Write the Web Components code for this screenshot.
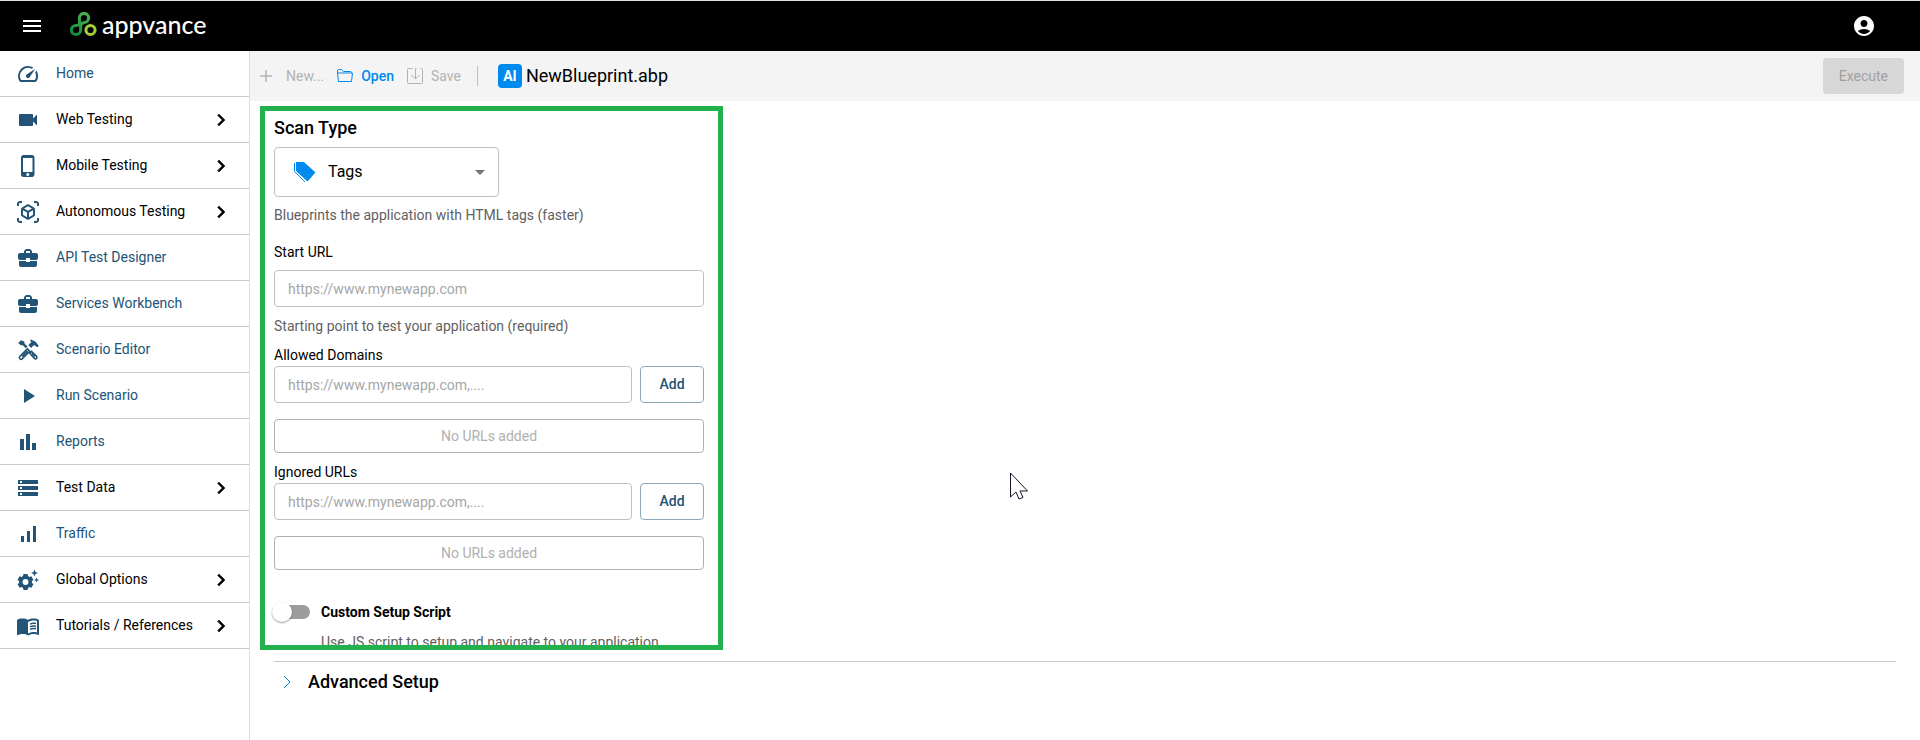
<!DOCTYPE html>
<html lang="en">
<head>
<meta charset="utf-8">
<title>NewBlueprint.abp</title>
<style>
  html, body{
    height: 100%;
    margin: 0;
  }
  body{
    background: #fff;
    color: #000;
    font-family: Roboto, "Liberation Sans", sans-serif;
    font-size: 14px;
    line-height: 20px;
    overflow: hidden;
    --navy: #215476;
    --blue: #008aee;
    --green: #22b14c;
    --muted: #5f5f5f;
    --disabled: #b2b2b2;
    --line: #c8c8c8;
  }
</style>
</head>
<body>

<app-shell>
  <app-header slot="header"></app-header>
  <side-nav slot="nav">
    <nav-item icon="speed">Home</nav-item>
    <nav-item icon="camera" group>Web Testing</nav-item>
    <nav-item icon="phone" group>Mobile Testing</nav-item>
    <nav-item icon="cube" group>Autonomous Testing</nav-item>
    <nav-item icon="case">API Test Designer</nav-item>
    <nav-item icon="case">Services Workbench</nav-item>
    <nav-item icon="tools">Scenario Editor</nav-item>
    <nav-item icon="play">Run Scenario</nav-item>
    <nav-item icon="bars">Reports</nav-item>
    <nav-item icon="storage" group>Test Data</nav-item>
    <nav-item icon="signal">Traffic</nav-item>
    <nav-item icon="gear" group>Global Options</nav-item>
    <nav-item icon="book" group>Tutorials / References</nav-item>
  </side-nav>
  <tool-bar>NewBlueprint.abp</tool-bar>
  <scan-panel>
    <scan-type></scan-type>
    <text-field label="Start URL" placeholder="https://www.mynewapp.com">Starting point to test your application (required)</text-field>
    <url-list label="Allowed Domains" placeholder="https://www.mynewapp.com,....">No URLs added</url-list>
    <url-list label="Ignored URLs" placeholder="https://www.mynewapp.com,....">No URLs added</url-list>
    <toggle-switch label="Custom Setup Script">Use JS script to setup and navigate to your application</toggle-switch>
  </scan-panel>
  <advanced-setup>Advanced Setup</advanced-setup>
</app-shell>
<mouse-pointer></mouse-pointer>

<script>

const ICONS = {
  speed: '<path d="m20.38 8.57-1.23 1.85a8 8 0 0 1-.22 7.58H5.07A8 8 0 0 1 15.58 6.85l1.85-1.23A10 10 0 0 0 3.35 19a2 2 0 0 0 1.72 1h13.85a2 2 0 0 0 1.74-1 10 10 0 0 0-.27-10.44zm-9.79 6.84a2 2 0 0 0 2.83 0l5.66-8.49-8.49 5.66a2 2 0 0 0 0 2.83z"/>',
  camera: '<path d="M17 10.5V7c0-.55-.45-1-1-1H4c-.55 0-1 .45-1 1v10c0 .55.45 1 1 1h12c.55 0 1-.45 1-1v-3.500l4 4v-11l-4 4z"/>',
  phone: '<path d="M16 1H7.500C6.100 1 5 2.100 5 3.500v17C5 21.900 6.100 23 7.500 23H16c1.400 0 2.500-1.100 2.500-2.500v-17C18.500 2.100 17.400 1 16 1zm-4.250 21c-.83 0-1.500-.67-1.500-1.500s.67-1.500 1.500-1.500 1.500.67 1.500 1.500-.67 1.500-1.500 1.500zM16.500 18H7V4h9.500v14z"/>',
  cube: '<path d="M3 4c0-.55.45-1 1-1h2V1H4C2.340 1 1 2.340 1 4v2h2V4zm0 16v-2H1v2c0 1.660 1.340 3 3 3h2v-2H4c-.55 0-1-.45-1-1zM20 1h-2v2h2c.55 0 1 .45 1 1v2h2V4c0-1.660-1.340-3-3-3zm1 19c0 .55-.45 1-1 1h-2v2h2c1.660 0 3-1.340 3-3v-2h-2v2zm-2-5.130V9.130c0-.72-.38-1.380-1-1.730l-5-2.880c-.31-.18-.65-.27-1-.27s-.69.09-1 .27L6 7.390c-.62.36-1 1.020-1 1.740v5.740c0 .72.38 1.380 1 1.730l5 2.880c.31.18.65.27 1 .27s.69-.09 1-.27l5-2.880c.62-.35 1-1.010 1-1.730zm-8 2.300-4-2.300v-4.630l4 2.330v4.600zm1-6.330L8.040 8.530 12 6.250l3.960 2.280L12 10.840zm5 4.030-4 2.300v-4.600l4-2.330v4.630z"/>',
  case: '<path d="M10 16v-1H3.010L3 19c0 1.110.89 2 2 2h14c1.110 0 2-.89 2-2v-4h-7v1h-4zm10-9h-4.010V5l-2-2h-4l-2 2v2H4c-1.100 0-2 .9-2 2v3c0 1.110.89 2 2 2h6v-2h4v2h6c1.100 0 2-.9 2-2V9c0-1.100-.9-2-2-2zm-6 0h-4V5h4v2z"/>',
  tools: '<path d="m15 10 3-3 3.500 2.200 1.300-1.300-3.200-4.100L15 1.600l-1 1 1.400 1.400-3 3zM5 2.200 2.200 5l2.600 2.300h2l3 3 1.700-1.700-3-3-.2-2z"/><path fill="none" stroke="currentColor" stroke-width="1.600" d="m11.300 10.900 2.400 2.400-7.400 7.400a1.700 1.700 0 0 1-2.400 0 1.700 1.700 0 0 1 0-2.400zm2.400 4.300 1.800-1.800 5 5a1.500 1.500 0 0 1 0 2 1.500 1.500 0 0 1-2 0zM6 18.600l5.500-5.500m4.500 2.200 3 3"/>',
  play: '<path d="M8 5v14l11-7z"/>',
  bars: '<path d="M4 9h4v11H4zm12 4h4v7h-4zm-6-9h4v16h-4z"/>',
  storage: '<path d="M2 20h20v-4H2v4zm2-3h2v2H4v-2zM2 4v4h20V4H2zm4 3H4V5h2v2zm-4 7h20v-4H2v4zm2-3h2v2H4v-2z"/>',
  signal: '<path d="M17 4h3v16h-3zM5 14h3v6H5zm6-5h3v11h-3z"/>',
  gear: '<path fill-rule="evenodd" d="m8 5-.5 2.100-1.400.8-2-.6-2 3.400 1.500 1.500v1.600L2.100 15.300l2 3.400 2-.6 1.400.8.5 2.100h4l.5-2.100 1.400-.8 2 .6 2-3.400-1.500-1.500v-1.600l1.500-1.500-2-3.400-2 .6-1.400-.8L12 5zm2 5a3 3 0 1 1 0 6 3 3 0 0 1 0-6z" transform="translate(-.5 1)"/><path d="m18.500 1.500 1 2.500 2.500 1-2.500 1-1 2.500-1-2.500-2.500-1 2.500-1zm2 8 .7 1.800 1.800.7-1.800.7-.7 1.800-.7-1.800-1.800-.7 1.800-.7z"/>',
  book: '<path d="M17.500 4.500c-1.950 0-4.050.4-5.500 1.500-1.450-1.100-3.550-1.500-5.500-1.500S2.450 4.900 1 6v14.650c0 .65.73.45.75.45C3.100 20.450 5.050 20 6.500 20c1.950 0 4.050.4 5.500 1.500 1.350-.85 3.800-1.500 5.500-1.500 1.650 0 3.350.3 4.750 1.050.41.21.75-.19.75-.45V6c-1.490-1.120-3.630-1.500-5.500-1.500zm3.500 14c-1.100-.35-2.300-.5-3.500-.5-1.700 0-4.150.65-5.500 1.500V8c1.350-.85 3.800-1.500 5.500-1.500 1.200 0 2.400.15 3.500.5v11.500zM14 9.200c2-.8 4-.9 6-.5v1.500c-2-.4-4-.3-6 .5zm0 2.700c2-.8 4-.9 6-.5v1.500c-2-.4-4-.3-6 .5zm0 2.700c2-.8 4-.9 6-.5v1.500c-2-.4-4-.3-6 .5z"/>',
  chevron: '<path d="M10 6 8.590 7.410 13.170 12l-4.580 4.590L10 18l6-6z" stroke="currentColor" stroke-width=".5"/>',
  account: '<path d="M12 2C6.480 2 2 6.480 2 12s4.480 10 10 10 10-4.480 10-10S17.520 2 12 2zm0 4c1.930 0 3.500 1.570 3.500 3.500S13.930 13 12 13s-3.500-1.570-3.500-3.500S10.070 6 12 6zm0 14c-2.030 0-4.430-.82-6.140-2.880C7.550 15.800 9.680 15 12 15s4.450.8 6.140 2.120C16.430 19.180 14.030 20 12 20z"/>',
  menu: '<path d="M3 18h18v-2H3v2zm0-5h18v-2H3v2zm0-7v2h18V6H3z"/>'
};

function icon(name){
  return `<svg width="24" height="24" viewBox="0 0 24 24" fill="currentColor" aria-hidden="true">${ICONS[name]}</svg>`;
}

class AppShell extends HTMLElement {
  
  constructor(){
    super();
    this.attachShadow({ mode: 'open' });
    this.shadowRoot.innerHTML = /*html*/ `
      <style>
        :host{
          display: flex;
          flex-direction: column;
          height: 100vh;
        }
        .body{
          display: flex;
          flex: 1;
          min-height: 0;
        }
        main{
          display: flex;
          flex-direction: column;
          flex: 1;
          min-width: 0;
        }
      </style>
      <slot name="header"></slot>
      <div class="body">
        <slot name="nav"></slot>
        <main><slot></slot></main>
      </div>
    `;
  }
  
}

class AppHeader extends HTMLElement {
  
  constructor(){
    super();
    this.attachShadow({ mode: 'open' });
    this.shadowRoot.innerHTML = /*html*/ `
      <style>
        :host{ display: block; }
        header{
          display: flex;
          align-items: center;
          height: 50px;
          padding: 0 44px 0 20px;
          border-top: 1px solid #dfe3e1;
          background: #000;
          color: #fff;
        }
        button{
          display: flex;
          padding: 0;
          border: none;
          background: none;
          color: inherit;
        }
        a{
          display: flex;
          align-items: center;
          gap: 4px;
          margin: 0 auto 0 26px;
          color: inherit;
          font: 500 25px/28px Lato, sans-serif;
          text-decoration: none;
        }
        a span{ padding-bottom: 4px; }
      </style>
      <header>
        <button aria-label="Menu">${icon('menu')}</button>
        <a href="#">
          <svg width="28" height="28" viewBox="0 0 28 28" fill="none" stroke-width="3" aria-hidden="true">
            <defs>
              <linearGradient id="leaf" gradientUnits="userSpaceOnUse" x1="2" y1="24" x2="18" y2="2">
                <stop offset="0" stop-color="#0b8a3e"/>
                <stop offset="1" stop-color="#4fb351"/>
              </linearGradient>
            </defs>
            <path stroke="url(#leaf)" d="M10.600 18a4.600 4.600 0 1 1-4.600-4.600c3 0 4.200-1 3.400-4.400v-3a4.600 4.600 0 1 1 4.600 4.600c-2.400.4-3.400 1.900-3.400 4.400z"/>
            <circle cx="20.500" cy="18" r="4.600" stroke="#a6ce39"/>
          </svg>
          <span>appvance</span>
        </a>
        <button aria-label="Account">${icon('account')}</button>
      </header>
    `;
  }
  
}

class SideNav extends HTMLElement {
  
  constructor(){
    super();
    this.attachShadow({ mode: 'open' });
    this.shadowRoot.innerHTML = /*html*/ `
      <style>
        :host{
          display: block;
          flex: none;
          width: 249px;
          border-right: 1px solid #dcdcdc;
        }
        nav{
          display: flex;
          flex-direction: column;
        }
      </style>
      <nav><slot></slot></nav>
    `;
  }
  
}

class NavItem extends HTMLElement {
  
  constructor(){
    super();
    this.attachShadow({ mode: 'open' });
    const isGroup = this.hasAttribute('group');
    const tag = isGroup ? 'button' : 'a';
    this.shadowRoot.innerHTML = /*html*/ `
      <style>
        :host{
          display: block;
          border-bottom: 1px solid var(--line);
        }
        a, button{
          display: flex;
          align-items: center;
          gap: 16px;
          box-sizing: border-box;
          width: 100%;
          height: 45px;
          padding: 0 16px;
          border: none;
          background: none;
          color: var(--navy);
          font: inherit;
          text-align: left;
          text-decoration: none;
        }
        button .label, .arrow{ color: #000; }
        .label{
          flex: 1;
          padding-bottom: 1px;
        }
        svg{ display: block; }
      </style>
      <${tag} ${isGroup ? '' : 'href="#"'}>
        ${icon(this.getAttribute('icon'))}
        <span class="label"><slot></slot></span>
        ${isGroup ? `<span class="arrow">${icon('chevron')}</span>` : ''}
      </${tag}>
    `;
  }
  
}

class ToolBar extends HTMLElement {
  
  constructor(){
    super();
    this.attachShadow({ mode: 'open' });
    this.shadowRoot.innerHTML = /*html*/ `
      <style>
        :host{
          display: flex;
          align-items: center;
          flex: none;
          height: 50px;
          padding: 0 16px 0 8px;
          background: #f4f4f4;
        }
        button{
          display: flex;
          align-items: center;
          gap: 8px;
          padding: 0;
          border: none;
          background: none;
          color: var(--blue);
          font: inherit;
          font-weight: 500;
        }
        button:disabled{
          color: var(--disabled);
          font-weight: 400;
        }
        .tools{
          display: flex;
          gap: 13px;
        }
        .new{ gap: 12px; }
        hr{
          width: 1px;
          height: 20px;
          margin: 0 20px 0 16px;
          border: none;
          background: #bdbdbd;
        }
        .badge{
          width: 24px;
          margin-right: 4px;
          border-radius: 4px;
          background: var(--blue);
          color: #fff;
          font-size: 14px;
          font-weight: 700;
          line-height: 24px;
          text-align: center;
        }
        h1{
          flex: 1;
          margin: 0;
          font-size: 18px;
          font-weight: 400;
          line-height: 24px;
        }
        .execute:disabled{
          height: 36px;
          padding: 0 16px;
          border-radius: 4px;
          background: #d7d7d7;
          color: #a0a0a0;
        }
      </style>
      <div class="tools">
        <button class="new" disabled>
          <svg width="16" height="16" viewBox="0 0 16 16" fill="none" stroke="currentColor" stroke-width="1.500"><path d="M8 2v12M2 8h12"/></svg>
          New...
        </button>
        <button>
          <svg width="16" height="16" viewBox="0 0 16 16" fill="none" stroke="currentColor"><path d="M.5 5V2.500a1 1 0 0 1 1-1h3l2 2h7a1 1 0 0 1 1 1V5M.5 5h15l-1 8.500h-13z"/></svg>
          Open
        </button>
        <button disabled>
          <svg width="16" height="16" viewBox="0 0 16 16" fill="none" stroke="currentColor"><path d="M5.500.5h-4a1 1 0 0 0-1 1v13a1 1 0 0 0 1 1h13a1 1 0 0 0 1-1v-13a1 1 0 0 0-1-1h-1M9.500.5h-1v10M4.500 7l4 4 4-4"/></svg>
          Save
        </button>
      </div>
      <hr>
      <span class="badge">AI</span>
      <h1><slot></slot></h1>
      <button class="execute" disabled>Execute</button>
    `;
  }
  
}

class ScanPanel extends HTMLElement {
  
  constructor(){
    super();
    this.attachShadow({ mode: 'open' });
    this.shadowRoot.innerHTML = /*html*/ `
      <style>
        :host{
          display: block;
          flex: 1;
          box-sizing: border-box;
          min-height: 0;
          width: 463px;
          max-width: calc(100% - 20px);
          margin: 5px 10px 0;
          padding: 5px 14px 0 9px;
          border: 5px solid var(--green);
          overflow: hidden;
        }
      </style>
      <form><slot></slot></form>
    `;
  }
  
}

class ScanType extends HTMLElement {
  
  constructor(){
    super();
    this.attachShadow({ mode: 'open' });
    this.shadowRoot.innerHTML = /*html*/ `
      <style>
        :host{ display: block; }
        label{
          display: block;
          font-size: 18px;
          font-weight: 500;
          line-height: 24px;
        }
        .select{
          display: grid;
          align-items: center;
          width: 225px;
          margin-top: 7px;
        }
        .select > *{ grid-area: 1 / 1; }
        select{
          appearance: none;
          box-sizing: border-box;
          width: 100%;
          height: 50px;
          padding: 0 40px 0 53px;
          border: 1px solid #c0c0c0;
          border-radius: 4px;
          background: #fff;
          color: #000;
          font: inherit;
          font-size: 16px;
        }
        svg{ pointer-events: none; }
        .tag{ margin-left: 18px; }
        .caret{
          justify-self: end;
          margin-right: 14px;
        }
        p{
          margin: 8px 0 0;
          color: var(--muted);
        }
      </style>
      <label for="type">Scan Type</label>
      <div class="select">
        <select id="type"><option>Tags</option></select>
        <svg class="tag" width="24" height="24" viewBox="0 0 24 24" fill="#008aee">
          <path d="M4 2h8l11 10a1 1 0 0 1 0 1l-7 8a1 1 0 0 1-1 0L4 11z"/>
          <path fill="none" stroke="#008aee" d="M2.500 3v8.500L13 22"/>
        </svg>
        <svg class="caret" width="10" height="5" viewBox="0 0 10 5" fill="#757575"><path d="M0 0h10L5 5z"/></svg>
      </div>
      <p>Blueprints the application with HTML tags (faster)</p>
    `;
  }
  
}

const FIELD_STYLES = /*css*/ `
  :host{ display: block; }
  label{ display: block; }
  input{
    box-sizing: border-box;
    width: 100%;
    height: 37px;
    padding: 0 13px;
    border: 1px solid #c0c0c0;
    border-radius: 4px;
    background: #fff;
    color: #000;
    font: inherit;
  }
  input::placeholder{ color: #a6a6a6; }
`;

class TextField extends HTMLElement {
  
  constructor(){
    super();
    this.attachShadow({ mode: 'open' });
    this.shadowRoot.innerHTML = /*html*/ `
      <style>
        ${FIELD_STYLES}
        :host{ margin-top: 17px; }
        input{ margin-top: 8px; }
        p{
          margin: 9px 0 0;
          color: var(--muted);
        }
      </style>
      <label for="field">${this.getAttribute('label')}</label>
      <input id="field" type="text" placeholder="${this.getAttribute('placeholder')}">
      <p><slot></slot></p>
    `;
  }
  
}

class UrlList extends HTMLElement {
  
  constructor(){
    super();
    this.attachShadow({ mode: 'open' });
    this.shadowRoot.innerHTML = /*html*/ `
      <style>
        ${FIELD_STYLES}
        :host{ margin-top: 9px; }
        .row{
          display: flex;
          gap: 8px;
          margin-top: 1px;
        }
        input{
          flex: 1;
          min-width: 0;
        }
        button{
          width: 64px;
          padding: 0 0 2px;
          border: 1px solid #8ea9ba;
          border-radius: 4px;
          background: #fff;
          color: var(--navy);
          font: inherit;
          font-weight: 500;
        }
        .list{
          margin-top: 16px;
          padding: 6px;
          border: 1px solid #b0b0b0;
          border-radius: 4px;
          color: #b0b0b0;
          text-align: center;
        }
      </style>
      <label for="url">${this.getAttribute('label')}</label>
      <div class="row">
        <input id="url" type="text" placeholder="${this.getAttribute('placeholder')}">
        <button type="button">Add</button>
      </div>
      <div class="list"><slot></slot></div>
    `;
  }
  
}

class ToggleSwitch extends HTMLElement {
  
  constructor(){
    super();
    this.attachShadow({ mode: 'open' });
    this.shadowRoot.innerHTML = /*html*/ `
      <style>
        :host{
          display: grid;
          grid-template-columns: 36px 1fr;
          align-items: center;
          column-gap: 11px;
          row-gap: 10px;
          margin-top: 32px;
        }
        input{
          appearance: none;
          display: flex;
          align-items: center;
          justify-self: end;
          width: 35px;
          height: 14px;
          margin: 0;
          border-radius: 7px;
          background: #9c9c9c;
        }
        input::before{
          content: "";
          width: 20px;
          height: 20px;
          margin-left: -3px;
          border-radius: 50%;
          background: #fff;
          box-shadow: 0 1px 2px rgba(0, 0, 0, .4);
          flex: none;
        }
        input:checked::before{ margin-left: 17px; }
        label{ font-weight: 700; }
        p{
          grid-column: 2;
          margin: 0;
          color: var(--muted);
        }
      </style>
      <input id="toggle" type="checkbox" role="switch">
      <label for="toggle">${this.getAttribute('label')}</label>
      <p><slot></slot></p>
    `;
  }
  
}

class AdvancedSetup extends HTMLElement {
  
  constructor(){
    super();
    this.attachShadow({ mode: 'open' });
    this.shadowRoot.innerHTML = /*html*/ `
      <style>
        :host{
          display: block;
          flex: none;
          margin: 11px 24px 0;
          padding: 8px 0 46px;
          border-top: 1px solid var(--line);
        }
        button{
          display: flex;
          align-items: center;
          gap: 17px;
          padding: 0 0 0 9px;
          border: none;
          background: none;
          color: #000;
          font: inherit;
          font-size: 18px;
          font-weight: 500;
          line-height: 24px;
        }
      </style>
      <button type="button" aria-expanded="false">
        <svg width="8" height="14" viewBox="0 0 8 14" fill="none" stroke="#008aee"><path d="m1 1 6 6-6 6"/></svg>
        <slot></slot>
      </button>
    `;
  }
  
}

class MousePointer extends HTMLElement {
  
  constructor(){
    super();
    this.attachShadow({ mode: 'open' });
    this.shadowRoot.innerHTML = /*html*/ `
      <style>
        :host{
          display: block;
          position: absolute;
          left: 1010px;
          top: 472px;
          pointer-events: none;
        }
      </style>
      <svg width="20" height="29" viewBox="0 0 20 29" fill="#fff" stroke="#14142a"><path d="M.5 1v24l5.500-5 3 7 4-1.500-3-6.500h7.500z"/></svg>
    `;
  }
  
}

customElements.define('app-shell', AppShell);
customElements.define('app-header', AppHeader);
customElements.define('side-nav', SideNav);
customElements.define('nav-item', NavItem);
customElements.define('tool-bar', ToolBar);
customElements.define('scan-panel', ScanPanel);
customElements.define('scan-type', ScanType);
customElements.define('text-field', TextField);
customElements.define('url-list', UrlList);
customElements.define('toggle-switch', ToggleSwitch);
customElements.define('advanced-setup', AdvancedSetup);
customElements.define('mouse-pointer', MousePointer);

</script>
</body>
</html>
